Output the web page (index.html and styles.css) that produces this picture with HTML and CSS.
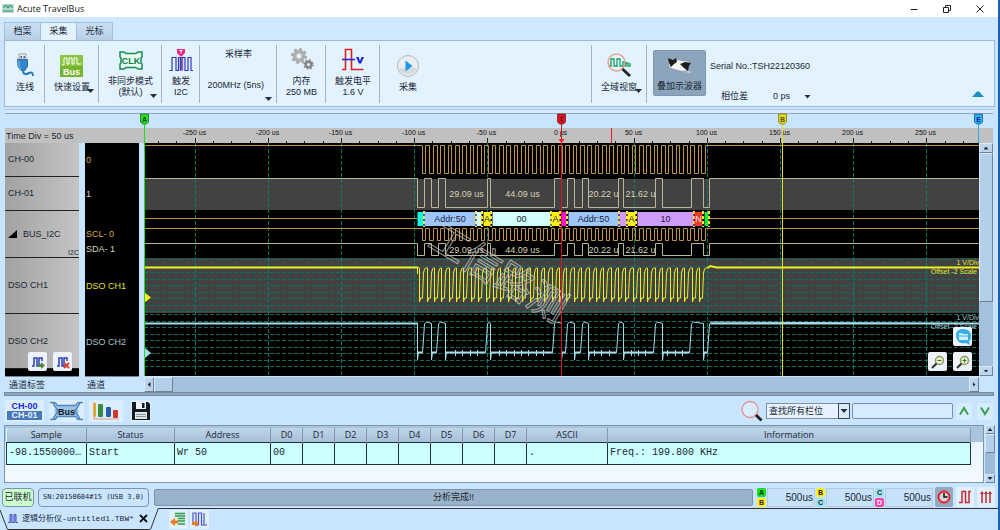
FILE: index.html
```html
<!DOCTYPE html>
<html lang="zh-CN">
<head>
<meta charset="utf-8">
<title>Acute TravelBus</title>
<link rel="stylesheet" href="styles.css">
</head>
<body>
<div class="app">
  <header class="titlebar">
    <svg class="app-icon" width="12" height="9" viewBox="0 0 12 9"><rect width="12" height="9" rx="1" fill="#b9d8cc"/><path d="M1 3h2v-1.500h2v2h2v-2h2v1.500h2M1 7h10" stroke="#2a9a72" fill="none"/></svg>
    <h1 class="app-title">Acute TravelBus</h1>
    <div class="window-buttons">
      <button class="win-btn" aria-label="最小化"><svg width="10" height="10" viewBox="0 0 10 10"><path d="M1.500 5.500h7" stroke="#222"/></svg></button>
      <button class="win-btn" aria-label="还原"><svg width="10" height="10" viewBox="0 0 10 10"><path d="M1.500 3.500h5v5h-5zM3.500 3v-1.500h5v5h-1.500" stroke="#222" fill="none"/></svg></button>
      <button class="win-btn" aria-label="关闭"><svg width="10" height="10" viewBox="0 0 10 10"><path d="M1.500 1.500l7 7M8.500 1.500l-7 7" stroke="#222"/></svg></button>
    </div>
  </header>

  <nav class="tabs">
    <button class="tab">档案</button>
    <button class="tab tab-active">采集</button>
    <button class="tab">光标</button>
  </nav>

  <section class="ribbon">
    <div class="group g-40">
      <button class="tool">
        <svg class="tool-icon" width="24" height="24" viewBox="0 0 24 24"><path d="M6 1h7v5h-7z" fill="#eef1f4" stroke="#8a9097" stroke-width=".8"/><path d="M7.500 3h1.500v2h-1.500zM10.500 3h1.500v2h-1.500z" fill="#555"/><path d="M4.500 6.500h10v7l-2.500 4h-4l-3-4z" fill="#2f86cf" stroke="#1b62a8" stroke-width=".8"/><path d="M6 8v5l2 3" stroke="#8cc4f2" fill="none"/><path d="M10 17c0 6 4 4 6 3s4-1 4 3" fill="none" stroke="#2579bd" stroke-width="2"/></svg>
        <span>连线</span>
      </button>
    </div>
    <div class="group g-54">
      <button class="tool">
        <svg class="tool-icon" width="24" height="24" viewBox="0 0 24 24"><rect x="0" y="2" width="23" height="22" fill="#77b52e"/><rect x="0" y="2" width="23" height="11" fill="#8cc544"/><path d="M2 12h2v-7h3v6h2v-6h3v6h2v-6h3v6h4" stroke="#fff" fill="none"/><text class="icon-text" x="11.500" y="21.500" font-size="9" fill="#fff">Bus</text></svg>
        <span>快速设置</span>
        <i class="caret caret-label"></i>
      </button>
    </div>
    <div class="group g-63">
      <button class="tool tool-two">
        <svg class="tool-icon" width="24" height="24" viewBox="0 0 24 24"><path d="M1 4h4l2 1.500h10l2-1.500h4v5l-1 1v5l1 1v5h-4l-2-1.500h-10l-2 1.500h-4v-5l1-1v-5l-1-1z" fill="#e6fff0" stroke="#158b52" stroke-width="1.500"/><text class="icon-text" x="12" y="16" font-size="9" fill="#0d7c46">CLK</text></svg>
        <span>非同步模式</span><span>(默认)</span>
        <i class="caret caret-corner"></i>
      </button>
    </div>
    <div class="group g-38">
      <button class="tool tool-two">
        <svg class="tool-icon" width="24" height="24" viewBox="0 0 24 24"><path d="M10.500 8h4v15h-4z" fill="#f4b7b7"/><path d="M1 23v-0.500h2v-13h4v13h2.500v-13h2v13M13 22.500v-13h3v13h3v-13h3v13h2" fill="none" stroke="#3038b8" stroke-width="1.200"/><path d="M8 1h8v4l-3 3h-2l-3-3z" fill="#e8267f"/><path d="M10.500 2.500h3M12 2.500v3" stroke="#fff" /></svg>
        <span>触发</span><span>I2C</span>
      </button>
    </div>
    <div class="group g-77 rate">
      <label class="rate-label" for="rate">采样率</label>
      <select class="plain-select rate-select" id="rate"><option>200MHz (5ns)</option></select>
      <i class="caret caret-rate"></i>
    </div>
    <div class="group g-49">
      <button class="tool tool-two">
        <svg class="tool-icon" width="24" height="24" viewBox="0 0 24 24"><circle cx="9" cy="8" r="4.500" fill="none" stroke="#b0b0b0" stroke-width="4"/><circle cx="9" cy="8" r="7" fill="none" stroke="#a6a6a6" stroke-width="2" stroke-dasharray="2.750 2.750"/><circle cx="18.500" cy="16.500" r="2.800" fill="none" stroke="#868686" stroke-width="2.400"/><circle cx="18.500" cy="16.500" r="4.500" fill="none" stroke="#868686" stroke-width="1.400" stroke-dasharray="1.770 1.770"/></svg>
        <span>内存</span><span>250 MB</span>
      </button>
    </div>
    <div class="group g-54">
      <button class="tool tool-two">
        <svg class="tool-icon" width="24" height="24" viewBox="0 0 24 24"><path d="M1 21.500h3.500v-20h6v20h12" fill="none" stroke="#e51c1c" stroke-width="1.600"/><path d="M1 11.500h13" stroke="#1a22dd" stroke-width="1.500"/><path d="M15 9h2.500l1.500 4 1.500-4h2.500l-3 6.500h-2z" fill="#1a22dd"/></svg>
        <span>触发电平</span><span>1.6 V</span>
      </button>
    </div>
    <div class="group g-56 g-open">
      <button class="tool">
        <svg class="tool-icon" width="24" height="24" viewBox="0 0 24 24"><circle cx="12" cy="13" r="10.500" fill="#eceff1" stroke="#b3b8bd"/><path d="M3 15a9.500 9.500 0 0 0 18 0z" fill="#d5dadd"/><path d="M9.500 7.500l7 5.500-7 5.500z" fill="#1e97e8"/></svg>
        <span>采集</span>
      </button>
    </div>
    <div class="ribbon-space"></div>
    <div class="group g-56 g-left">
      <button class="tool">
        <svg class="tool-icon" width="24" height="24" viewBox="0 0 24 24"><path d="M2 13h2v-7h3v7h3v-7h3v7h3v-4h2v4h1v-3h2v3h2v-3" fill="none" stroke="#15a05a" stroke-width="1.300"/><circle cx="9.500" cy="9.500" r="8.500" fill="none" stroke="#e9a08c" stroke-width="1.400"/><path d="M15.500 16l7.500 7" stroke="#222" stroke-width="2.800"/></svg>
        <span>全域视窗</span>
        <i class="caret caret-label"></i>
      </button>
    </div>
    <button class="overlay-btn">
      <svg width="26" height="18" viewBox="0 0 26 18"><path d="M2 3l4 2 3-1 13 2-1 8-6 1-11-3-2-3z" fill="#f4f4f4"/><path d="M1 2l5 2 3-2 1 4-3 2-3 3-2-4zM13 8l5-2 6 1-2 3-1 5-4-3z" fill="#1c1c1c"/><path d="M17 16l6-1 1 2z" fill="#d5d5d5"/></svg>
      <span>叠加示波器</span>
    </button>
    <div class="serial">
      <p class="serial-no">Serial No.:TSH22120360</p>
      <div class="phase">
        <label for="phase">相位差</label>
        <select class="plain-select phase-select" id="phase"><option>0 ps</option></select>
        <i class="caret"></i>
      </div>
    </div>
    <button class="collapse" aria-label="收起功能区"><svg width="12" height="6" viewBox="0 0 12 6"><path d="M0 6l5-5.500h2l5 5.500z" fill="#1c8fc6"/></svg></button>
  </section>

  <main class="scope">
    <div class="time-div"><span>Time Div = 50 us</span></div>
    <div class="ruler-end"></div>
    <div class="labels">
      <div class="label-row ch">CH-00</div>
      <div class="label-row ch">CH-01</div>
      <div class="label-row bus"><svg width="9" height="8" viewBox="0 0 9 8"><path d="M9 0v8h-9z"/></svg><span>BUS_I2C</span><small>I2C</small></div>
      <div class="label-row dso">DSO CH1</div>
      <div class="label-row dso dso-last">DSO CH2</div>
      <div class="label-tools">
        <button class="mini" aria-label="添加通道"><svg width="16" height="16" viewBox="0 0 16 16"><path d="M2 12h2v-8h3v8h2v-8h3v3" fill="none" stroke="#2e3fb9" stroke-width="1.500"/><path d="M8 10h3v-2l4 3.500-4 3.500v-2h-3z" fill="#4a8a3a"/></svg></button>
        <button class="mini" aria-label="删除通道"><svg width="16" height="16" viewBox="0 0 16 16"><path d="M2 12h2v-8h3v8h2v-8h3v3" fill="none" stroke="#2e3fb9" stroke-width="1.500"/><path d="M9 9l5 5M14 9l-5 5" stroke="#d8402a" stroke-width="2"/></svg></button>
      </div>
    </div>
    <div class="values">
      <div class="value ch gold">0</div>
      <div class="value ch pale">1</div>
      <div class="value bus-values"><span class="gold">SCL- 0</span><span class="pale">SDA- 1</span></div>
      <div class="value dso yellow">DSO CH1</div>
      <div class="value dso sky">DSO CH2</div>
    </div>
    <div class="plot">
      <svg id="plot" class="plot-svg" role="img" aria-label="I2C 波形"></svg>
      <button class="mini float chat" aria-label="消息"><svg width="18" height="18" viewBox="0 0 18 18"><path d="M2 6q1-5 7-5 8 0 8 7 0 4-2 5l1 4-4-2q-10 2-10-9z" fill="#35aee6"/><path d="M5 5h3l1 1h5v6h-9z" fill="#c9efff"/><path d="M5 8h9" stroke="#35aee6"/></svg></button>
      <div class="float zooms">
        <button class="mini" aria-label="缩小"><svg width="16" height="16" viewBox="0 0 16 16"><circle cx="9.500" cy="6.500" r="4" fill="#f0f7df" stroke="#8a9a5a" stroke-width="1.500"/><path d="M7.500 6.500h4" stroke="#3c7a28" stroke-width="1.200"/><path d="M6.500 9.500l-4.500 4.500" stroke="#333" stroke-width="2.200"/></svg></button>
        <button class="mini" aria-label="放大"><svg width="16" height="16" viewBox="0 0 16 16"><circle cx="9.500" cy="6.500" r="4" fill="#f0f7df" stroke="#8a9a5a" stroke-width="1.500"/><path d="M7.500 6.500h4M9.500 4.500v4" stroke="#3c7a28" stroke-width="1.200"/><path d="M6.500 9.500l-4.500 4.500" stroke="#333" stroke-width="2.200"/></svg></button>
      </div>
    </div>
    <div class="vscroll">
      <button class="sb-btn" aria-label="向上"><i class="tri tri-up"></i></button>
      <div class="sb-thumb plot-thumb"></div>
      <div class="sb-space"></div>
      <button class="sb-btn" aria-label="向下"><i class="tri tri-down"></i></button>
    </div>
    <div class="foot-name foot-a">通道标签</div>
    <div class="foot-name foot-b">通道</div>
    <div class="hscroll">
      <button class="sb-btn" aria-label="向左"><i class="tri tri-left"></i></button>
      <div class="sb-thumb h-thumb"></div>
      <div class="sb-space"></div>
      <button class="sb-btn" aria-label="向右"><i class="tri tri-right"></i></button>
    </div>
  </main>
  <div class="splitter"></div>

  <section class="report-tools">
    <button class="rt-btn ch-btn"><span class="ch-top">CH-00</span><span class="ch-bottom">CH-01</span></button>
    <button class="rt-btn" aria-label="Bus"><svg width="35" height="20" viewBox="0 0 35 20"><path d="M9 4h17l4 6-4 6h-17l-4-6z" fill="#9cc4ea"/><path d="M1 1.500h4q2 0 3 3h19q1-3 3-3h4M1 18.500h4q2 0 3-3h19q1 3 3 3h4M4 2l5 8-5 8M31 2l-5 8 5 8" fill="none" stroke="#4f86bd" stroke-width="1.500"/><text class="icon-text" x="17.500" y="13.500" font-size="9" fill="#111">Bus</text></svg></button>
    <button class="rt-btn stats" aria-label="统计"><svg width="28" height="20" viewBox="0 0 28 20"><path d="M2 1v17h25" fill="none" stroke="#e39a7a" stroke-width="1.200"/><rect x="1.500" y="2" width="2.500" height="14" rx="1" fill="#d9a52b"/><rect x="6" y="3" width="5" height="13" rx="1" fill="#3c8b3f"/><rect x="14" y="6" width="5" height="10" rx="1" fill="#2a5fae"/><rect x="21" y="9" width="5" height="8" rx="1" fill="#cf3a24"/></svg></button>
    <button class="rt-btn" aria-label="保存"><svg width="20" height="20" viewBox="0 0 20 20"><path d="M1 1h16l2 2v16h-18z" fill="#141b20"/><path d="M5 1h10v7h-10z" fill="#eef4f8"/><path d="M11 2h2.500v5h-2.500z" fill="#141b20"/><path d="M4 11h12v7h-12z" fill="#dfe6ea"/><path d="M5 13.500h10M5 15.500h10" stroke="#8a959c"/></svg></button>
    <div class="ribbon-space"></div>
    <svg class="find-icon" width="24" height="22" viewBox="0 0 24 22"><circle cx="10" cy="9.500" r="8" fill="#d9ecff" stroke="#e98f86" stroke-width="1.300"/><path d="M16 15l5.500 5.500" stroke="#222" stroke-width="2.800"/></svg>
    <span class="find-field"><select class="find-select" aria-label="查找栏位"><option>查找所有栏位</option></select><span class="find-drop"><i class="caret"></i></span></span>
    <input class="find-input" type="text" aria-label="查找内容">
    <button class="rt-btn arrow-btn" aria-label="上一个"><svg width="10" height="10" viewBox="0 0 10 10"><path d="M1 8.500l4-6.500 4 6.500" fill="none" stroke="#3ba04b" stroke-width="2"/></svg></button>
    <button class="rt-btn arrow-btn" aria-label="下一个"><svg width="10" height="10" viewBox="0 0 10 10"><path d="M1 1.500l4 6.500 4-6.500" fill="none" stroke="#3ba04b" stroke-width="2"/></svg></button>
  </section>

  <section class="report">
    <div class="report-body">
      <table class="data">
        <colgroup><col class="c-sample"><col class="c-status"><col class="c-addr"><col class="c-d" span="8"><col class="c-ascii"><col></colgroup>
        <thead><tr><th>Sample</th><th>Status</th><th>Address</th><th>D0</th><th>D1</th><th>D2</th><th>D3</th><th>D4</th><th>D5</th><th>D6</th><th>D7</th><th>ASCII</th><th>Information</th></tr></thead>
        <tbody><tr><td>-98.1550000…</td><td>Start</td><td>Wr 50</td><td>00</td><td></td><td></td><td></td><td></td><td></td><td></td><td></td><td>.</td><td>Freq.: 199.800 KHz</td></tr></tbody>
      </table>
    </div>
    <div class="report-scroll">
      <button class="sb-btn" aria-label="向上"><i class="tri tri-up"></i></button>
      <div class="sb-thumb report-thumb"></div>
      <div class="sb-space"></div>
      <button class="sb-btn" aria-label="向下"><i class="tri tri-down"></i></button>
    </div>
  </section>

  <section class="status">
    <span class="pill pill-green">已联机</span>
    <span class="pill pill-sn">SN:20150604#15 (USB 3.0)</span>
    <div class="progress">分析完成!!</div>
    <div class="delta"><span class="pair"><b class="k-green">A</b><b class="k-yellow">B</b></span><output class="delta-value">500us</output></div>
    <div class="delta"><span class="pair"><b class="k-yellow">B</b><b class="k-cyan">C</b></span><output class="delta-value">500us</output></div>
    <div class="delta"><span class="pair"><b class="k-cyan">C</b><b class="k-pink">D</b></span><output class="delta-value">500us</output></div>
    <button class="st-btn st-active" aria-label="时间"><svg width="16" height="16" viewBox="0 0 16 16"><circle cx="8" cy="8" r="5.500" fill="#cfd8e2" stroke="#ee1c1c" stroke-width="1.800"/><path d="M8 4v4h3.500" fill="none" stroke="#111" stroke-width="1.500"/></svg></button>
    <button class="st-btn" aria-label="波形"><svg width="16" height="16" viewBox="0 0 16 16"><path d="M2 13.500h3v-11h3.500v11h3.500v-11h2" fill="none" stroke="#c22a2a" stroke-width="1.500"/></svg></button>
    <button class="st-btn" aria-label="触发位置"><svg width="16" height="16" viewBox="0 0 16 16"><path d="M4 3v11M8 3v11M12 3v11" stroke="#c22a2a" stroke-width="1.500"/><path d="M2 5l2-3 2 3zM6 5l2-3 2 3zM10 5l2-3 2 3z" fill="#c22a2a"/></svg></button>
  </section>

  <footer class="docs">
    <div class="doc-tab">
      <svg class="tab-edge" width="8" height="22" viewBox="0 0 8 22"><path d="M0 2l7.500 19.500" stroke="#333" fill="none"/></svg>
      <div class="doc-inner">
        <svg width="11" height="11" viewBox="0 0 11 11"><path d="M0 9.500h2v-8h2v8h2v-8h2v8h2M3 1v9M7 1v9" fill="none" stroke="#4a55c0"/></svg>
        <span class="doc-name">逻辑分析仪-untitled1.TBW*</span>
        <button class="doc-close" aria-label="关闭文档"><svg width="9" height="9" viewBox="0 0 9 9"><path d="M1 1l7 7M8 1l-7 7" stroke="#111" stroke-width="1.800"/></svg></button>
      </div>
      <svg class="tab-edge" width="9" height="22" viewBox="0 0 9 22"><path d="M8.500 0l-8 21.500" stroke="#333" fill="none"/></svg>
    </div>
    <div class="doc-rest">
      <button class="doc-btn" aria-label="新建报告"><svg width="17" height="17" viewBox="0 0 17 17"><path d="M4 1h11v13h-11z" fill="#d8f0dc"/><path d="M5 2.500h10M5 5h10M8 7.500h7M8 10h7M8 13h7" stroke="#2f9a57" stroke-width="1.400"/><path d="M0 11l5-4v2.500h3v3h-3v2.500z" fill="#ee7a1c"/></svg></button>
      <button class="doc-btn" aria-label="新建波形"><svg width="17" height="17" viewBox="0 0 17 17"><path d="M2 12v-10h3v12h2.500v-12h3v12h2.500v-12M13 2v12h3" fill="none" stroke="#4a55c0" stroke-width="1.200"/><path d="M8 12.500l-4 3.500v-2h-3v-3h3v-2z" fill="#ee7a1c"/></svg></button>
    </div>
  </footer>
</div>
<script src="plot.js"></script>
</body>
</html>
```

FILE: styles.css
```css
* { box-sizing: border-box; }
body {
  margin: 0;
  font: 9px/11px "Liberation Sans", "Noto Sans CJK SC", sans-serif;
  color: #1b2733;
  background: #c8e4ff;
}
button, select, input { font: inherit; color: inherit; margin: 0; padding: 0; border: 0; background: none; border-radius: 0; }
button { display: flex; align-items: center; justify-content: center; }
svg { display: block; flex: none; }
p, h1 { margin: 0; font-weight: normal; }

.app {
  min-height: 100vh;
  display: flex;
  flex-direction: column;
  border-right: 2px solid #1b62b4;
  background: #c8e4ff;
}
.icon-text { font-family: "Liberation Sans", sans-serif; font-weight: bold; text-anchor: middle; }

/* Title bar */
.titlebar { display: flex; align-items: center; height: 17px; background: #fff; padding-left: 2px; gap: 3px; }
.app-title { flex: 1; font: 9px/17px "Open Sans", "Noto Sans", sans-serif; color: #222; }
.window-buttons { display: flex; gap: 23px; padding-right: 13px; }
.win-btn { width: 10px; height: 15px; }

/* Tabs */
.tabs { display: flex; padding: 5px 4px 0; height: 23px; background: #cfe7ff; }
.tab { width: 36px; background: linear-gradient(#cadff3, #b7cfe6); border: 1px solid #a5bdd6; border-bottom: 0; border-left-width: 0; }
.tab:first-child { width: 37px; border-left-width: 1px; }
.tab-active { background: #e2f2ff; }

/* Ribbon */
.ribbon {
  display: flex;
  margin: 0 3px 0 4px;
  height: 67px;
  border: 1px solid #9fb9d4;
  background: #e2f2ff;
}
.group { position: relative; flex: none; }
.group::after { content: ""; position: absolute; right: 0; top: 4px; bottom: 3px; width: 1px; background: #a3b3c2; }
.g-open::after { display: none; }
.g-left::before { content: ""; position: absolute; left: 0; top: 4px; bottom: 3px; width: 1px; background: #a3b3c2; }
.g-40 { width: 40px; }
.g-54 { width: 54px; }
.g-63 { width: 63px; }
.g-38 { width: 38px; }
.g-77 { width: 77px; }
.g-49 { width: 49px; }
.g-56 { width: 56px; }
.tool { position: relative; width: 100%; height: 100%; flex-direction: column; justify-content: flex-start; padding-top: 12px; white-space: nowrap; }
.tool-icon { margin-bottom: 5px; }
.tool-two { padding-top: 7px; }
.tool-two .tool-icon { margin-bottom: 4px; }
.caret { display: block; width: 7px; height: 4px; background: #222e3a; clip-path: polygon(0 0, 100% 0, 50% 100%); }
.caret-label { position: absolute; right: 5px; bottom: 13px; }
.caret-corner { position: absolute; right: 5px; bottom: 8px; }
.caret-rate { position: absolute; right: 5px; bottom: 5px; }
.rate { display: flex; flex-direction: column; align-items: center; gap: 20px; padding-top: 8px; }
.plain-select { appearance: none; height: 11px; }
.rate-select { width: 62px; }
.ribbon-space { flex: 1; }
.overlay-btn {
  flex-direction: column;
  gap: 7px;
  width: 53px;
  height: 46px;
  margin: 9px 4px 0 6px;
  padding-top: 2px;
  border: 1px solid #7f98b0;
  border-radius: 2px;
  background: #8da5bc;
}
.serial { width: 210px; padding-top: 20px; }
.phase { display: flex; align-items: center; gap: 25px; margin: 19px 0 0 11px; }
.phase .caret { margin-left: -12px; }
.phase-select { width: 18px; }
.collapse { align-self: flex-end; margin: 0 10px 9px 52px; }

/* Scope */
.scope {
  display: grid;
  grid-template-columns: 74px 6px 54px 5px minmax(0, 1fr) 14px;
  grid-template-rows: 29px 233px 16px;
  margin: 7px 5px 0;
  background: #c8e4ff;
  box-shadow: 0 -1px 0 #8fa9c3, 0 -4px 0 #d4e9ff, 0 -5px 0 #a8c3dd;
}
.time-div, .ruler-end { background: linear-gradient(#c8e4ff 14px, #c0c0c0 14px); }
.time-div { grid-area: 1 / 1 / 2 / 5; padding: 17px 0 0 1px; }
.ruler-end { grid-area: 1 / 6; }
.labels { position: relative; grid-area: 2 / 1; background: #000; }
.label-row { display: flex; align-items: center; padding-left: 3px; border-bottom: 1px solid #222; background: linear-gradient(90deg, #a2a2a2, #c4c4c4); }
.ch { height: 34px; }
.bus { position: relative; height: 47px; gap: 6px; }
.bus small { position: absolute; right: 0; bottom: 0; font-size: 7px; line-height: 9px; }
.dso { height: 56px; }
.dso-last { height: 55px; }
.label-tools { position: absolute; left: 23px; bottom: 5px; display: flex; gap: 6px; }
.mini { width: 19px; height: 19px; border-radius: 2px; background: #eef3fb; }
.values { grid-area: 2 / 3; background: #000; }
.value { display: flex; align-items: center; padding-left: 1px; }
.bus-values { height: 47px; flex-direction: column; align-items: flex-start; justify-content: flex-end; gap: 4px; padding-bottom: 3px; }
.gold { color: #d9a84a; }
.pale { color: #d8d2b8; }
.yellow { color: #e6e22e; }
.sky { color: #a9c6cc; }
.plot { position: relative; grid-area: 1 / 5 / 3 / 6; background: linear-gradient(#c8e4ff 14px, #c0c0c0 14px, #c0c0c0 29px, #000 29px); }
.plot-svg { width: 100%; height: 262px; overflow: visible; font-family: "Liberation Sans", sans-serif; }
.float { position: absolute; right: 7px; }
.chat { bottom: 30px; }
.zooms { display: flex; gap: 6px; bottom: 5px; }
.vscroll { grid-area: 2 / 6; display: flex; flex-direction: column; background: #a3c0dc; }
.sb-btn { flex: none; background: #bdd5ec; border: 1px solid #dcebfa; border-right-color: #6d8299; border-bottom-color: #6d8299; }
.vscroll .sb-btn { height: 10px; }
.sb-thumb { flex: none; background: #b4cfe9; border: 1px solid #dcebfa; border-right-color: #6d8299; border-bottom-color: #6d8299; }
.plot-thumb { height: 149px; }
.sb-space { flex: 1; }
.tri { display: block; width: 5px; height: 3px; background: #1d2a38; }
.tri-up { clip-path: polygon(0 100%, 50% 0, 100% 100%); }
.tri-down { clip-path: polygon(0 0, 100% 0, 50% 100%); }
.tri-left { width: 3px; height: 5px; clip-path: polygon(100% 0, 100% 100%, 0 50%); }
.tri-right { width: 3px; height: 5px; clip-path: polygon(0 0, 100% 50%, 0 100%); }
.foot-name { padding: 3px 0 0 4px; border-top: 1px solid #7088a0; white-space: nowrap; }
.foot-a { grid-area: 3 / 1; }
.foot-b { grid-area: 3 / 3; padding-left: 2px; }
.hscroll { grid-area: 3 / 5; display: flex; margin-top: 1px; background: #a3c0dc; }
.hscroll .sb-btn { width: 10px; }
.h-thumb { width: 19px; }
.splitter { height: 4px; margin: 0 4px; background: #8fa5b9; border: 1px solid #778da2; }

/* Report toolbar */
.report-tools { display: flex; align-items: center; height: 22px; margin: 4px 5px 3px; }
.rt-btn { flex: none; height: 22px; margin-right: 5px; background: #dbeeff; }
.ch-btn { width: 39px; flex-direction: column; font-weight: bold; line-height: 9px; }
.ch-top { color: #1c27d6; }
.ch-bottom { width: 35px; background: #4878b8; color: #e8f2ff; }
.stats { width: 34px; margin-right: 8px; }
.find-icon { margin-right: 2px; }
.find-field { display: flex; position: relative; width: 84px; height: 16px; margin-right: 2px; }
.find-select { appearance: none; width: 100%; padding: 0 14px 0 2px; border: 1px solid #7d90a5; background: #e6f3ff; }
.find-drop { position: absolute; right: 0; top: 0; display: flex; align-items: center; justify-content: center; width: 12px; height: 16px; border: 1px solid #3a4857; background: #dbe9f7; pointer-events: none; }
.find-input { width: 101px; height: 16px; margin-right: 3px; border: 1px solid #7d90a5; border-radius: 2px; background: #d6ebff; }
.arrow-btn { width: 16px; height: 17px; background: #d6ecff; }
.arrow-btn:last-child { margin-right: 0; }

/* Report table */
.report { display: flex; gap: 1px; height: 58px; margin: 0 3px 0 4px; }
.report-body { flex: 1; padding: 2px 2px 0 1px; border: 1px solid #7f95aa; background: linear-gradient(#a9c4dd 16px, #e8f4ff 16px, #f4faff); }
.data { width: calc(100% - 10px); table-layout: fixed; border-collapse: collapse; background: #ccffff; }
.c-sample { width: 80px; }
.c-status { width: 88px; }
.c-addr { width: 96px; }
.c-d { width: 32px; }
.c-ascii { width: 81px; }
.data th { height: 14px; padding: 0; font: 9px/12px "Open Sans", "Noto Sans", sans-serif; background: linear-gradient(#bfd4e8, #a5bfd8); border-right: 1px solid #8299b0; }
.data td { height: 22px; padding: 0 2px; font: 10px/12px "Liberation Mono", monospace; white-space: nowrap; border: 1px solid #1f3038; }
.report-scroll { display: flex; flex-direction: column; width: 10px; background: #9dbbd6; }
.report-scroll .sb-btn { height: 9px; }
.report-thumb { height: 19px; }

/* Status bar */
.status { display: flex; align-items: center; height: 20px; margin: 4px 3px 1px 2px; gap: 2px; }
.pill { flex: none; height: 19px; line-height: 17px; text-align: center; border: 1px solid #7c93ab; border-radius: 4px; white-space: nowrap; }
.pill-green { width: 32px; margin-right: 2px; background: #ccffcc; }
.pill-sn { width: 111px; margin-right: 3px; font-family: "DejaVu Sans Mono", monospace; font-size: 7px; }
.progress { flex: 1; height: 17px; margin-right: 2px; line-height: 15px; text-align: center; border: 1px solid #7c93ab; border-radius: 2px; background: #9ab3ca; }
.delta { flex: none; display: flex; gap: 1px; }
.delta + .delta { margin-left: -1px; }
.pair { display: flex; flex-direction: column; gap: 1px; width: 9px; }
.pair b { height: 9px; border-radius: 2px; font-size: 7px; line-height: 9px; text-align: center; }
.k-green { background: #16e01c; }
.k-yellow { background: #fff01c; }
.k-cyan { background: #9fe0ea; }
.k-pink { background: #ff3ea8; color: #fff; }
.delta-value { display: block; width: 48px; height: 19px; padding-right: 1px; font-size: 10px; line-height: 17px; text-align: right; border: 1px solid #b2c9df; background: #c6e2fb; }
.st-btn { flex: none; width: 18px; height: 20px; margin-left: 1px; background: #e0f0ff; }
.st-active { margin-left: 0; border-radius: 2px; background: #93a9c0; }

/* Document tabs */
.docs { display: flex; height: 22px; }
.doc-tab { display: flex; height: 22px; }
.doc-inner { display: flex; align-items: center; width: 142px; gap: 3px; border-bottom: 1px solid #333; }
.doc-name { font: 8px/11px "Liberation Mono", "Noto Sans CJK SC", monospace; white-space: nowrap; }
.doc-close { margin-left: 2px; }
.doc-rest { flex: 1; display: flex; align-items: center; gap: 2px; padding-left: 10px; border-top: 1px solid #333; }
.doc-btn { width: 19px; height: 19px; background: #e0f0ff; }

/* Plot strokes */
.scl { fill: none; stroke: #bd9643; }
.sda { fill: none; stroke: #bdb695; }
.grid { stroke: #0d7a64; stroke-dasharray: 4 2; }
.grid-h { stroke: #0d6e5c; stroke-dasharray: 4 2; }
.row-bg { fill: #424242; }
.tick { stroke: #222; }
.tick-text { font-size: 7px; fill: #111; text-anchor: middle; }
.seg-text { font-size: 9px; fill: #16243a; text-anchor: middle; }
.seg-light { font-size: 9px; fill: #ffe9e0; text-anchor: middle; }
.seg-edge { stroke: #f3ea3a; stroke-dasharray: 3 2; stroke-width: 2; }
.dur-text { font-size: 9px; fill: #d8d2b8; text-anchor: middle; }
.dso1 { fill: none; stroke: #f4ee1c; }
.dso2 { fill: none; stroke: #a4dcea; }
.thick { stroke-width: 2; }
.scale-text { font-size: 7px; text-anchor: end; }
.flag-text { font-size: 7px; font-weight: bold; text-anchor: middle; }
.watermark { font: 38px "Noto Sans CJK SC", sans-serif; fill: none; stroke: #c9c9c9; stroke-width: 1; opacity: .75; }
```

FILE: plot.js
```js
(function () {
  var svg = document.getElementById('plot');
  var SPAN = 285; // microseconds on each side of the trigger

  // Positions below are in microseconds relative to the trigger.
  var sdaHigh = [[-285, -98], [-93.500, -88.500], [-84, -79], [-50, -48], [-4.500, 0.500],
    [4.500, 9], [14.500, 19], [39.500, 43], [64.500, 69.500], [89, 97.500], [101.500, 285]];
  var segments = [
    [-98, -94, '#19f5e5', ''], [-93, -58.500, '#9fc6fb', 'Addr:50'], [-57.500, -54, '#d6ffff', ''],
    [-53, -48, '#ffee1c', 'A'], [-47, -7.500, '#d2fffb', '00'], [-6.500, -1, '#ffee1c', 'A'],
    [0, 4, '#ff14d8', ''], [5, 39, '#9fc6fb', 'Addr:50'], [40, 44.500, '#d09cf8', ''],
    [45.500, 51, '#ffee1c', 'A'], [52, 90.500, '#cf9bf9', '10'], [91.500, 97, '#f03a2c', 'N'], [98, 101, '#24e63a', '']
  ];

  function draw() {
    var w = svg.clientWidth;
    var out = [];
    function x(t) { return Math.floor((t + SPAN) / (2 * SPAN) * (w - 1)) + 0.5; }
    function line(x1, y1, x2, y2, cls, extra) {
      out.push('<line x1="' + x1 + '" y1="' + y1 + '" x2="' + x2 + '" y2="' + y2 + '" class="' + cls + '" ' + (extra || '') + '/>');
    }
    function rect(x1, y1, x2, y2, cls, extra) {
      out.push('<rect x="' + x1 + '" y="' + y1 + '" width="' + (x2 - x1) + '" height="' + (y2 - y1) + '" class="' + cls + '" ' + (extra || '') + '/>');
    }
    function text(tx, ty, cls, s, extra) {
      out.push('<text x="' + tx + '" y="' + ty + '" class="' + cls + '" ' + (extra || '') + '>' + s + '</text>');
    }
    function path(d, cls) { out.push('<path d="' + d + '" class="' + cls + '"/>'); }

    rect(0, 65, w, 96, 'row-bg');
    rect(0, 144, w, 199, 'row-bg');

    for (var i = 0; i < 9; i++) {
      line(0, 145.5 + Math.round(i * 6.5), w, 145.5 + Math.round(i * 6.5), 'grid-h');
      line(0, 200.5 + Math.round(i * 6.5), w, 200.5 + Math.round(i * 6.5), 'grid-h');
    }
    for (var t = -275; t <= 275; t += 12.5) {
      var major = t % 50 === 0;
      line(x(t), major ? 24 : 27, x(t), 29, 'tick');
      if (major) {
        line(x(t), 29, x(t), 262, 'grid');
        text(x(t) - 1, 21, 'tick-text', t === 0 ? '0 ps' : t + ' us');
      }
    }

    function clock(hi, lo) {
      var d = 'M0 ' + hi;
      for (var n = 0; n < 39; n++) {
        var a = -94.8 + n * 5.03;
        d += 'H' + x(a) + 'V' + lo + 'H' + x(a + 2.5) + 'V' + hi;
      }
      return d + 'H' + w;
    }
    function data(hi, lo) {
      var d = '';
      sdaHigh.forEach(function (p, k) {
        d += (k ? 'H' + x(p[0]) + 'V' : 'M0 ') + hi + 'H' + x(p[1]) + (p[1] < SPAN ? 'V' + lo : '');
      });
      return d;
    }
    path(clock(31.5, 59.5), 'scl');
    path(data(64.5, 93.5), 'sda');
    path(clock(114.5, 126.5), 'scl');
    path(data(129.5, 141.5), 'sda');

    line(0, 104.5, x(-98), 104.5, 'scl');
    line(x(101), 104.5, w, 104.5, 'scl');
    segments.forEach(function (s) {
      rect(x(s[0]), 98, x(s[1]), 112, '', 'fill="' + s[2] + '"');
      line(x(s[1]) + 0.5, 97, x(s[1]) + 0.5, 113, 'seg-edge');
      if (s[3]) text((x(s[0]) + x(s[1])) / 2, 108, s[3] === 'N' ? 'seg-light' : 'seg-text', s[3]);
    });

    [['29.09 us', -64.5], ['44.09 us', -26], ['20.22 u', 29], ['21.62 u', 54]].forEach(function (p) {
      text(x(p[1]), 83, 'dur-text', p[0]);
      text(x(p[1]), 139, 'dur-text', p[0]);
    });

    // Analog clock: rounded rise, vertical fall with a short undershoot.
    var d1 = 'M' + x(-98) + ' 153V160V153';
    for (var n = 0; n < 39; n++) {
      var a = x(-96.5 + n * 5.03);
      d1 += 'L' + a + ' 154V188L' + (a + 1) + ' 184H' + (a + 3) + 'L' + (a + 4) + ' 159L' + (a + 5) + ' 155L' + (a + 6) + ' 154';
    }
    path('M0 153.500H' + x(-98), 'dso1 thick');
    path(d1 + 'L' + x(100) + ' 154', 'dso1');
    path('M' + x(100) + ' 154L' + x(102) + ' 152L' + x(106) + ' 153.500H' + w, 'dso1 thick');

    var d2 = 'M0 209.500';
    var base = '';
    sdaHigh.forEach(function (p, k) {
      if (k) {
        var b = x(p[0]), e = x(p[1]);
        d2 += 'H' + (b - 2) + 'L' + (b - 1) + ' 225L' + b + ' 210L' + Math.min(b + 2, e) + ' 208';
        base += 'M' + x(sdaHigh[k - 1][1]) + ' 238.500H' + (b - 2);
      }
      d2 += 'L' + (p[1] < SPAN ? x(p[1]) : w) + ' 209.500';
      if (p[1] < SPAN) d2 += 'V246L' + (x(p[1]) + 1) + ' 238.500';
    });
    path(d2, 'dso2');
    path(base, 'dso2 thick');
    path('M0 209.500H' + x(-98) + 'M' + x(102) + ' 209.500H' + w, 'dso2 thick');
    for (t = -77; t < 88; t += 5) {
      if (!sdaHigh.some(function (p) { return t > p[0] - 3 && t < p[1] + 3; })) line(x(t), 236, x(t), 242, 'dso2');
    }

    text(w, 151, 'scale-text', '1 V/Div', 'fill="#e6e22e"');
    text(w - 2, 160, 'scale-text', 'Offset -2 Scale', 'fill="#e6e22e"');
    text(w, 206, 'scale-text', '1 V/Div', 'fill="#a9c6cc"');
    text(w - 2, 215, 'scale-text', 'Offset -2 Scale', 'fill="#a9c6cc"');
    out.push('<path d="M0 178L7 183.500L0 189Z" fill="#fff21c"/><path d="M0 233L7 239L0 245Z" fill="#a4dcea"/>');

    var wx = x(-92);
    text(wx, 131, 'watermark', '工信路测', 'transform="rotate(31 ' + wx + ' 131)"');

    function cursor(t, color, bottom, letter, ink) {
      var cx = x(t);
      line(cx, 10, cx, bottom, '', 'stroke="' + color + '"');
      out.push('<path d="M' + (cx - 4) + ' 0H' + (cx + 4) + 'V8L' + (cx + 2) + ' 10H' + (cx - 2) + 'L' + (cx - 4) + ' 8Z" fill="' + color + '" stroke="' + ink + '" stroke-width=".6"/>');
      text(cx, 8, 'flag-text', letter, 'fill="' + ink + '"');
    }
    line(x(34.5), 14, x(34.5), 29, '', 'stroke="#e01c24"');
    cursor(-285, '#22dd22', 262, 'A', '#0a4a0a');
    cursor(151.5, '#e8dc1c', 262, 'B', '#5a5200');
    cursor(285, '#25b4e8', 29, 'E', '#0a2a9a');
    cursor(0.5, '#e0141e', 262, 'T', '#5a0008');
    out.push('<path d="M' + (x(0.5) - 3) + ' 25H' + (x(0.5) + 3) + 'L' + x(0.5) + ' 29Z" fill="#ff1c1c"/>');

    svg.innerHTML = out.join('');
  }

  draw();
  window.addEventListener('resize', draw);
})();
```
